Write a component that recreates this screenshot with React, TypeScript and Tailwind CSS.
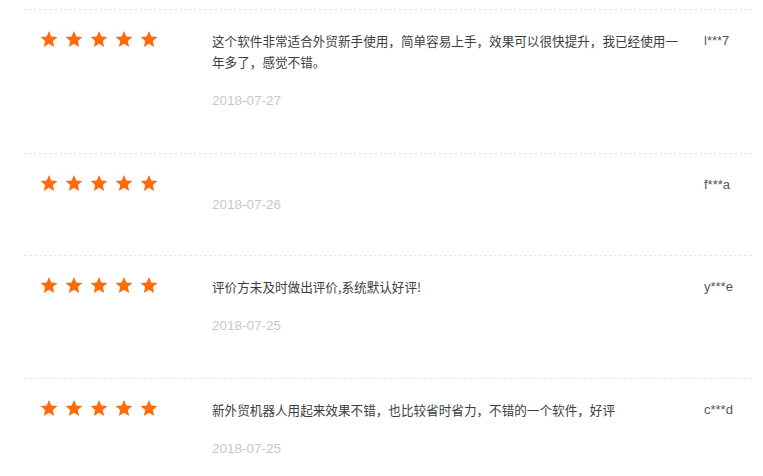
import React from 'react'

type Review = {
  stars: number
  text: string
  date: string
  user: string
}

const reviews: Review[] = [
  {
    stars: 5,
    text: '这个软件非常适合外贸新手使用，简单容易上手，效果可以很快提升，我已经使用一年多了，感觉不错。',
    date: '2018-07-27',
    user: 'l***7',
  },
  { stars: 5, text: '', date: '2018-07-26', user: 'f***a' },
  { stars: 5, text: '评价方未及时做出评价,系统默认好评!', date: '2018-07-25', user: 'y***e' },
  {
    stars: 5,
    text: '新外贸机器人用起来效果不错，也比较省时省力，不错的一个软件，好评',
    date: '2018-07-25',
    user: 'c***d',
  },
]

function Star() {
  return (
    <svg width="18" height="18" viewBox="0 0 24 24" className="shrink-0">
      <polygon
        points="12,1.2 15.1,8.6 23.2,9.3 17.1,14.6 18.9,22.6 12,18.4 5.1,22.6 6.9,14.6 0.8,9.3 8.9,8.6"
        fill="#ff6a0a"
      />
    </svg>
  )
}

export default function App() {
  return (
    <div
      className="w-[763px] h-[476px] overflow-hidden bg-white pt-[9px]"
      style={{ fontFamily: '"Liberation Sans", "Noto Sans CJK SC", sans-serif' }}
    >
      <div className="ml-[24px] w-[728px]">
        {reviews.map((r, i) => (
          <div
            key={i}
            className={
              r.text
                ? 'flex border-t border-dashed border-[#e6e6e6] pt-[20px] pb-[42px] pl-[16px]'
                : 'flex border-t border-dashed border-[#e6e6e6] pt-[20px] pb-[40px] pl-[16px]'
            }
          >
            <div className="w-[172px] shrink-0 h-[21px] flex items-start gap-[7px]">
              {Array.from({ length: r.stars }).map((_, j) => (
                <Star key={j} />
              ))}
            </div>
            <div className="w-[476px] shrink-0">
              {r.text && (
                <p
                  className="text-[12.6px] leading-[21px] text-[#3d3d3d]"
                  style={{ fontFamily: '"Noto Sans CJK SC", sans-serif' }}
                >
                  {r.text}
                </p>
              )}
              <p
                className={
                  r.text
                    ? 'mt-[18px] text-[13.5px] leading-[21px] text-[#c8c8c8]'
                    : 'mt-[20px] text-[13.5px] leading-[21px] text-[#c8c8c8]'
                }
              >
                {r.date}
              </p>
            </div>
            <div className="ml-[16px] text-[13px] leading-[21px] text-[#555]">{r.user}</div>
          </div>
        ))}
      </div>
    </div>
  )
}
